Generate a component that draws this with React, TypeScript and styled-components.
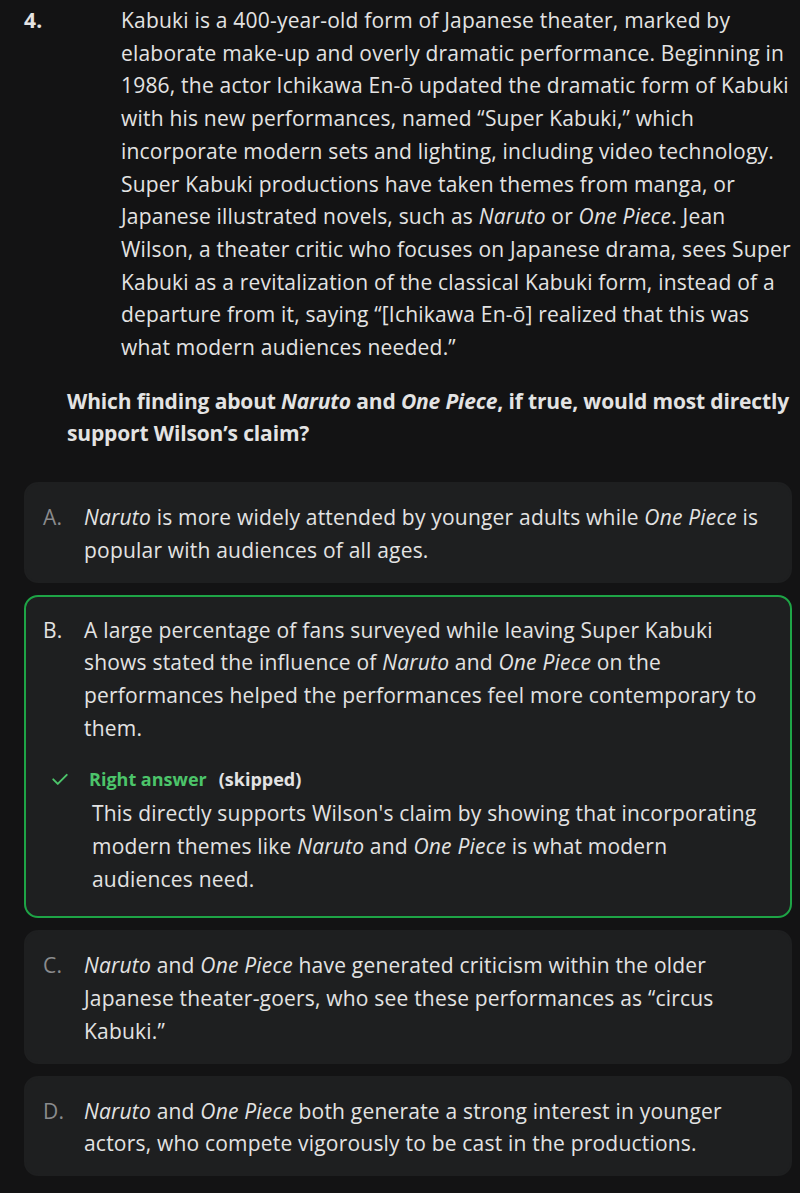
import styled, { createGlobalStyle } from "styled-components";

const GlobalStyle = createGlobalStyle`
  html, body {
    margin: 0;
    padding: 0;
    background: #131314;
  }
  body {
    color: #e3e3e3;
    font-family: "Open Sans", Roboto, "Liberation Sans", sans-serif;
    font-size: 21px;
    line-height: 32.7px;
    letter-spacing: 0.2px;
    -webkit-font-smoothing: antialiased;
  }
`;

const Page = styled.div`
  width: 800px;
  min-height: 1193px;
  box-sizing: border-box;
  padding: 4px 4px 0 24px;
`;

const Passage = styled.div`
  display: grid;
  grid-template-columns: 97px 1fr;
`;

const Number = styled.div`
  font-weight: bold;
`;

const PassageText = styled.p`
  margin: 0;
`;

const Question = styled.p`
  margin: 21px 0 32px 43px;
  font-weight: bold;
  letter-spacing: -0.15px;
`;

const Options = styled.div`
  display: flex;
  flex-direction: column;
  gap: 12px;
  margin-right: 4px;
`;

const Card = styled.div<{ $correct?: boolean }>`
  background: #1e1f20;
  border-radius: 14px;
  border: 2px solid ${(p) => (p.$correct ? "#1ea446" : "#1e1f20")};
  padding: 17px 30px 14px 17px;
  box-sizing: border-box;
`;

const OptionRow = styled.div`
  display: flex;
`;

const Letter = styled.div<{ $active?: boolean }>`
  flex: 0 0 41px;
  color: ${(p) => (p.$active ? "#e3e3e3" : "#8a8b8d")};
`;

const OptionText = styled.div`
  flex: 1;
`;

const Verdict = styled.div`
  display: flex;
  align-items: center;
  margin-top: 16px;
  padding-left: 8px;
  height: 37px;
  font-size: 18px;
  font-weight: bold;
  letter-spacing: 0;
`;

const CheckIcon = styled.svg`
  width: 18px;
  height: 18px;
  margin-right: 20px;
`;

const RightLabel = styled.span`
  color: #4cc46a;
  margin-right: 12px;
`;

const Explanation = styled.p`
  margin: 0 0 7px 49px;
`;

const Option = ({
  letter,
  active,
  children,
}: {
  letter: string;
  active?: boolean;
  children: React.ReactNode;
}) => (
  <OptionRow>
    <Letter $active={active}>{letter}.</Letter>
    <OptionText>{children}</OptionText>
  </OptionRow>
);

export default function App() {
  return (
    <>
      <GlobalStyle />
      <Page>
        <Passage>
          <Number>4.</Number>
          <PassageText>
            Kabuki is a 400-year-old form of Japanese theater, marked by
            elaborate make-up and overly dramatic performance. Beginning in
            1986, the actor Ichikawa En-ō updated the dramatic form of Kabuki
            with his new performances, named “Super Kabuki,” which incorporate
            modern sets and lighting, including video technology. Super Kabuki
            productions have taken themes from manga, or Japanese illustrated
            novels, such as <i>Naruto</i> or <i>One Piece</i>. Jean Wilson, a
            theater critic who focuses on Japanese drama, sees Super Kabuki as
            a revitalization of the classical Kabuki form, instead of a
            departure from it, saying “[Ichikawa En-ō] realized that this was
            what modern audiences needed.”
          </PassageText>
        </Passage>

        <Question>
          Which finding about <i>Naruto</i> and <i>One Piece</i>, if true, would
          most directly support Wilson’s claim?
        </Question>

        <Options>
          <Card>
            <Option letter="A">
              <i>Naruto</i> is more widely attended by younger adults while{" "}
              <i>One Piece</i> is popular with audiences of all ages.
            </Option>
          </Card>

          <Card $correct>
            <Option letter="B" active>
              A large percentage of fans surveyed while leaving Super Kabuki
              shows stated the influence of <i>Naruto</i> and <i>One Piece</i>{" "}
              on the performances helped the performances feel more
              contemporary to them.
            </Option>
            <Verdict>
              <CheckIcon viewBox="0 0 24 24">
                <path
                  d="M3 12.5l6 6L21 6.5"
                  fill="none"
                  stroke="#4cc46a"
                  strokeWidth="2.6"
                  strokeLinecap="round"
                  strokeLinejoin="round"
                />
              </CheckIcon>
              <RightLabel>Right answer</RightLabel>
              <span>(skipped)</span>
            </Verdict>
            <Explanation>
              This directly supports Wilson's claim by showing that
              incorporating modern themes like <i>Naruto</i> and{" "}
              <i>One Piece</i> is what modern audiences need.
            </Explanation>
          </Card>

          <Card>
            <Option letter="C">
              <i>Naruto</i> and <i>One Piece</i> have generated criticism within
              the older Japanese theater-goers, who see these performances as
              “circus Kabuki.”
            </Option>
          </Card>

          <Card>
            <Option letter="D">
              <i>Naruto</i> and <i>One Piece</i> both generate a strong interest
              in younger actors, who compete vigorously to be cast in the
              productions.
            </Option>
          </Card>
        </Options>
      </Page>
    </>
  );
}
